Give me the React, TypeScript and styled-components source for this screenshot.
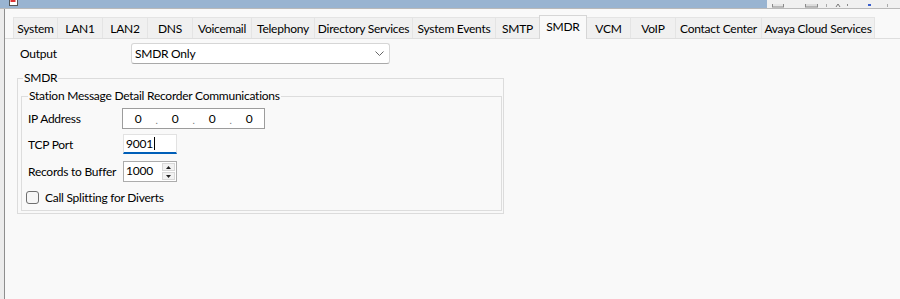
import React from "react";
import styled, { createGlobalStyle } from "styled-components";

const Global = createGlobalStyle`
  html, body { margin: 0; padding: 0; background: #f9f9f9; }
  body {
    font-family: Lato, "Noto Sans", "Open Sans", sans-serif;
    font-size: 12px;
    letter-spacing: -0.25px;
    color: #000;
  }
  #root { width: 900px; height: 299px; }
`;

const Window = styled.div`
  width: 900px;
  height: 299px;
  overflow: hidden;
  display: flex;
  flex-direction: column;
  background: #f9f9f9;
`;

const TitleBar = styled.div`
  height: 8px;
  flex-shrink: 0;
  display: flex;
  border-bottom: 1px solid #b9b9b9;
`;

const TitleMain = styled.div`
  width: 767px;
  height: 8px;
  background: #99b4d1;
  display: flex;
  align-items: flex-start;
  overflow: hidden;
`;

const AppIcon = styled.svg`
  margin-left: 9px;
  flex-shrink: 0;
`;

const TitleTools = styled.div`
  flex: 1;
  height: 8px;
  background: #f0f0f0;
  overflow: hidden;
`;

const Body = styled.div`
  flex: 1;
  display: flex;
  min-height: 0;
`;

const LeftEdge = styled.div`
  width: 4px;
  flex-shrink: 0;
  background: #ececec;
  border-right: 1px solid #8e8e8e;
`;

const Main = styled.div`
  flex: 1;
  padding-top: 8px;
  display: flex;
  flex-direction: column;
`;

const TabRow = styled.div`
  height: 21px;
  padding-left: 9px;
  display: flex;
  align-items: flex-end;
  border-bottom: 1px solid #dedede;
`;

const Tab = styled.div<{ $w: number; $active?: boolean }>`
  box-sizing: border-box;
  width: ${(p) => p.$w}px;
  height: ${(p) => (p.$active ? 24 : 21)}px;
  margin-bottom: ${(p) => (p.$active ? -1 : 0)}px;
  position: relative;
  z-index: ${(p) => (p.$active ? 1 : 0)};
  display: flex;
  align-items: center;
  justify-content: center;
  padding-bottom: ${(p) => (p.$active ? 3 : 0)}px;
  background: ${(p) => (p.$active ? "#f9f9f9" : "#f0f0f0")};
  border: 1px solid ${(p) => (p.$active ? "#d6d6d6" : "#e4e4e4")};
  border-bottom: none;
  margin-left: -1px;
  white-space: nowrap;
`;

const Panel = styled.div`
  padding: 4px 0 0 12px;
  display: flex;
  flex-direction: column;
`;

const OutputRow = styled.div`
  height: 21px;
  padding-left: 3px;
  display: flex;
  align-items: center;
`;

const OutputLabel = styled.span`
  width: 111px;
  flex-shrink: 0;
`;

const Select = styled.div`
  box-sizing: border-box;
  width: 259px;
  height: 21px;
  background: #fff;
  border: 1px solid #d6d6d6;
  border-bottom-color: #a9a9a9;
  border-radius: 3px;
  display: flex;
  align-items: center;
  justify-content: space-between;
  padding: 0 5px 0 3px;
`;

const GroupBox = styled.fieldset<{ $w: number; $outer?: boolean }>`
  box-sizing: border-box;
  width: ${(p) => p.$w}px;
  margin: ${(p) => (p.$outer ? "6px 0 0 0" : "2px 0 0 0")};
  border: 1px solid ${(p) => (p.$outer ? "#dcdcdc" : "#dddddd")};
  padding: ${(p) => (p.$outer ? "0 1px 2px 3px" : "4px 0 7px 6px")};
  min-inline-size: 0;
  display: flex;
  flex-direction: column;
`;

const Legend = styled.legend<{ $ml: number }>`
  padding: 0 1px;
  margin-left: ${(p) => p.$ml}px;
  font-size: 12px;
  line-height: 16px;
`;

const FieldRow = styled.div<{ $h: number; $mt: number }>`
  height: ${(p) => p.$h}px;
  margin-top: ${(p) => p.$mt}px;
  display: flex;
  align-items: center;
`;

const FieldLabel = styled.span`
  width: 95px;
  flex-shrink: 0;
`;

const IpBox = styled.div`
  box-sizing: border-box;
  width: 143px;
  height: 21px;
  margin-left: -1px;
  background: #fff;
  border: 1px solid #9c9c9c;
  display: flex;
  align-items: center;
`;

const Octet = styled.span`
  width: 30px;
  text-align: center;
`;

const Dot = styled.span`
  width: 7px;
  text-align: center;
  color: #777;
  font-size: 10px;
  padding-top: 3px;
`;

const TextInput = styled.div`
  box-sizing: border-box;
  width: 54px;
  height: 20px;
  background: #fff;
  border: 1px solid #e2e2e2;
  border-bottom: 2px solid #005fb8;
  display: flex;
  align-items: center;
  padding-left: 2px;
`;

const Caret = styled.span`
  width: 1px;
  height: 13px;
  background: #000;
  margin-left: 1px;
`;

const Spinner = styled.div`
  box-sizing: border-box;
  width: 54px;
  height: 21px;
  background: #fff;
  border: 1px solid #acacac;
  display: flex;
  align-items: flex-start;
  justify-content: space-between;
  padding: 1px 1px 1px 2px;
`;

const SpinValue = styled.span`
  line-height: 15px;
`;

const SpinButtons = styled.div`
  width: 13px;
  height: 17px;
  display: flex;
  flex-direction: column;
  gap: 1px;
`;

const SpinButton = styled.div`
  flex: 1;
  background: #f2f2f2;
  border: 1px solid #d8d8d8;
  display: flex;
  align-items: center;
  justify-content: center;
`;

const CheckRow = styled.label`
  height: 12px;
  margin-top: 9px;
  margin-left: -2px;
  display: flex;
  align-items: center;
  gap: 6px;
`;

const CheckBox = styled.span`
  box-sizing: border-box;
  width: 13px;
  height: 13px;
  border: 1px solid #6f6f6f;
  border-radius: 3px;
  background: #f6f6f6;
`;

const tabs: { label: string; w: number }[] = [
  { label: "System", w: 45 },
  { label: "LAN1", w: 46 },
  { label: "LAN2", w: 46 },
  { label: "DNS", w: 46 },
  { label: "Voicemail", w: 60 },
  { label: "Telephony", w: 64 },
  { label: "Directory Services", w: 99 },
  { label: "System Events", w: 84 },
  { label: "SMTP", w: 45 },
  { label: "SMDR", w: 48 },
  { label: "VCM", w: 45 },
  { label: "VoIP", w: 46 },
  { label: "Contact Center", w: 87 },
  { label: "Avaya Cloud Services", w: 114 },
];

const Arrow = ({ up }: { up?: boolean }) => (
  <svg width="5" height="3" viewBox="0 0 5 3">
    <path d={up ? "M0 3 L2.5 0 L5 3 Z" : "M0 0 L2.5 3 L5 0 Z"} fill="#222" />
  </svg>
);

export default function App() {
  return (
    <Window>
      <Global />
      <TitleBar>
        <TitleMain>
          <AppIcon width="9" height="6" viewBox="0 0 9 6">
            <rect x="0.5" y="-1" width="8" height="6.5" fill="#fff" stroke="#555" />
            <rect x="1.5" y="0" width="5" height="2" fill="#d33" />
          </AppIcon>
        </TitleMain>
        <TitleTools>
          <svg width="133" height="8" viewBox="0 0 133 8">
            <rect x="5.5" y="-2" width="11" height="5" fill="#e6e6e6" stroke="#8a8a8a" />
            <rect x="38.5" y="-2" width="12" height="5" fill="#dcdcdc" stroke="#8a8a8a" />
            <line x1="59.5" y1="0" x2="59.5" y2="3" stroke="#aaa" />
            <path d="M69 3 L71 0 L73 3" fill="none" stroke="#777" />
            <line x1="80.5" y1="0" x2="80.5" y2="2" stroke="#888" />
            <rect x="101" y="0" width="3" height="2" fill="#3a5fcd" />
            <line x1="120.5" y1="0" x2="120.5" y2="3" stroke="#aaa" />
          </svg>
        </TitleTools>
      </TitleBar>
      <Body>
        <LeftEdge />
        <Main>
          <TabRow>
            {tabs.map((t) => (
              <Tab key={t.label} $w={t.w} $active={t.label === "SMDR"}>
                {t.label}
              </Tab>
            ))}
          </TabRow>
          <Panel>
            <OutputRow>
              <OutputLabel>Output</OutputLabel>
              <Select>
                <span>SMDR Only</span>
                <svg width="9" height="5" viewBox="0 0 9 5">
                  <path d="M0.5 0.5 L4.5 4.5 L8.5 0.5" fill="none" stroke="#666" strokeWidth="1" />
                </svg>
              </Select>
            </OutputRow>
            <GroupBox $w={487} $outer>
              <Legend $ml={2}>SMDR</Legend>
              <GroupBox $w={481}>
                <Legend $ml={0}>Station Message Detail Recorder Communications</Legend>
                <FieldRow $h={21} $mt={0}>
                  <FieldLabel>IP Address</FieldLabel>
                  <IpBox>
                    <Octet>0</Octet>
                    <Dot>.</Dot>
                    <Octet>0</Octet>
                    <Dot>.</Dot>
                    <Octet>0</Octet>
                    <Dot>.</Dot>
                    <Octet>0</Octet>
                  </IpBox>
                </FieldRow>
                <FieldRow $h={20} $mt={5}>
                  <FieldLabel>TCP Port</FieldLabel>
                  <TextInput>
                    <span>9001</span>
                    <Caret />
                  </TextInput>
                </FieldRow>
                <FieldRow $h={21} $mt={7}>
                  <FieldLabel>Records to Buffer</FieldLabel>
                  <Spinner>
                    <SpinValue>1000</SpinValue>
                    <SpinButtons>
                      <SpinButton>
                        <Arrow up />
                      </SpinButton>
                      <SpinButton>
                        <Arrow />
                      </SpinButton>
                    </SpinButtons>
                  </Spinner>
                </FieldRow>
                <CheckRow>
                  <CheckBox />
                  <span>Call Splitting for Diverts</span>
                </CheckRow>
              </GroupBox>
            </GroupBox>
          </Panel>
        </Main>
      </Body>
    </Window>
  );
}
